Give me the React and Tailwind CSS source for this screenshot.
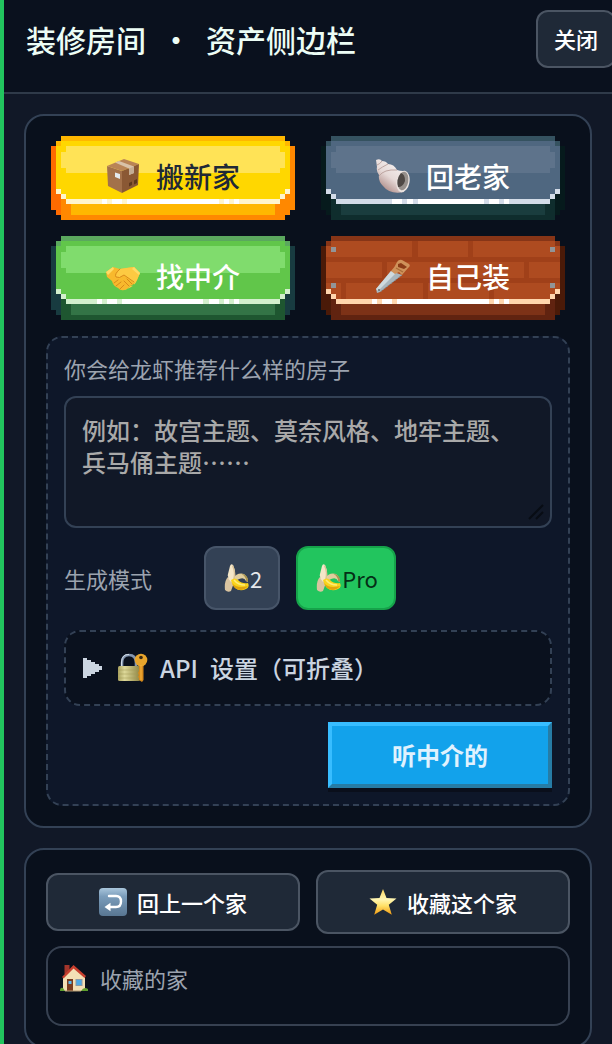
import React, { useState } from 'react';

const BoxIcon = ({ className }) => (
  <svg className={className} viewBox="0 0 34 34" aria-hidden="true">
    <path d="M1 7 L16 12 L16 34 L2 27 Z" fill="#a3714a" />
    <path d="M1 7 L18 0 L33 5 L16 12 Z" fill="#b98456" />
    <path d="M16 12 L33 5 L32 26 L16 34 Z" fill="#8a5834" />
    <path d="M9 3.500 L13 2 L28 7.500 L28 14 L23 16 L23 9.500 Z" fill="#d9c2a8" />
    <path d="M23 9.500 L28 7.500 L28 14 L23 16 Z" fill="#c4ad94" />
    <path d="M9 13.500 L14 15 L14 20 L9 18 Z" fill="#e4eaee" />
    <path d="M23 24 L26 22.500 V26 L23 27.500 Z M28 21.500 L31 20 V24 L28 25.500 Z" fill="#5d371d" />
  </svg>
);

const ShellIcon = ({ className }) => (
  <svg className={className} viewBox="0 0 34 34" aria-hidden="true">
    <defs>
      <linearGradient id="shell-body" x1="0.7" y1="0.1" x2="0.2" y2="0.9">
        <stop offset="0" stopColor="#f4efee" />
        <stop offset="0.5" stopColor="#e6d9d7" />
        <stop offset="1" stopColor="#ab8884" />
      </linearGradient>
    </defs>
    <path d="M0 1 Q4 -1 6 2 Q10 2 12 5 Q18 5 21 11 Q24 12 27 12 L28 33 Q14 36 7 27 Q2 22 3 16 Q0 12 1 8 Z" fill="url(#shell-body)" />
    <path d="M1 6 Q4 5 6 2 M2 11 Q6 8 12 5 M3 17 Q8 10 21 11" fill="none" stroke="#bda5a1" strokeWidth="1" />
    <ellipse cx="27" cy="22.500" rx="6.500" ry="10.800" transform="rotate(10 27 22.5)" fill="#ebe3e0" />
    <ellipse cx="27" cy="22" rx="5.300" ry="9.300" transform="rotate(10 27 22)" fill="#96908c" />
    <path d="M25 14 Q29 15 29 22 Q27 28 22 28 Q20 20 25 14" fill="#4e4845" />
  </svg>
);

const HandshakeIcon = ({ className }) => (
  <svg className={className} viewBox="0 0 34 34" aria-hidden="true">
    <path d="M0 13 L7 8 L14 10 L21 9 L28 8 L34 14 L31 21 Q29 25 24 27 Q21 31 18 31 Q15 32 12 29 Q7 27 6 22 L1 18 Z" fill="#f8b92d" />
    <path d="M14 10 Q9 15 10 18 Q13 20 18 16 L28 24 Q29 27 24 27 Q21 31 18 31 Q29 28 31 21 L34 14 L28 8 L20 9 Z" fill="#fdca42" />
    <path d="M14 10 Q8 15 10 18 Q13 20 18 16 L28 23 M8 24 L12 21 M10 27 L15 23 M14 30 L18 26 M21 20 L26 25 M18 22 L23 27" fill="none" stroke="#d98a1a" strokeWidth="1" strokeLinecap="round" />
    <path d="M0 13 L7 8 L8 10 L2 16 Z M28 8 L34 14 L33 16 L26 10 Z" fill="#ffdc66" />
  </svg>
);

const SawIcon = ({ className }) => (
  <svg className={className} viewBox="0 0 34 34" aria-hidden="true">
    <path d="M15 12 L26 16 L4 33 L1 34 L0 30 Z" fill="#a9b6bc" />
    <path d="M15 12 L20 14 L2 32 L0 30 Z" fill="#cfdadd" />
    <path d="M26 16 L4 33" stroke="#82929a" strokeWidth="1" strokeDasharray="1.5 1" />
    <circle cx="3" cy="31" r="0.900" fill="#59666c" />
    <path d="M15 12 Q19 8 21 3 Q23 0 26 1 L33 5 Q35 7 32 9 L26 16 L23 13 L19 15 Z" fill="#cf925a" />
    <path d="M22 5 L25 4 L31 8 L28 10 L22 8 Z" fill="#8c3c17" />
    <path d="M20 9 L27 13" stroke="#a86c38" strokeWidth="1.2" />
  </svg>
);

const BananaIcon = ({ className }) => (
  <svg className={className} viewBox="0 0 28 28" aria-hidden="true">
    <path d="M6 13 Q2 17 3 26 Q6 29 9 27 Q11 21 13 17 Z" fill="#d9c4a0" />
    <path d="M11 15 Q15 8 22 10 Q26 13 26 18 L24 17 Q22 12 15 16 Z" fill="#e0cd9d" />
    <path d="M19 9.500 Q27 11 26 18 L24 17 Q24 12 19 9.500" fill="#a8934f" />
    <path d="M8 2 Q9 -1 11 1 Q14 7 13 15 L9 18 Q5 14 6 10 Z" fill="#f4e6c8" />
    <path d="M10 2 Q13 8 11 16 L13 15 Q14 7 11 1 Z" fill="#d9c196" />
    <path d="M9 16 Q13 13 16 16 Q20 20 26 19 Q28 23 24 25 Q18 28 13 24 Q10 21 9 16 Z" fill="#f9d41c" />
    <path d="M10 19 Q15 25 26 22 Q23 26 18 26 Q12 25 10 19" fill="#e0a50f" />
    <path d="M12 16 Q16 21 23 21" fill="none" stroke="#ffec78" strokeWidth="1.500" />
  </svg>
);

const LockKeyIcon = ({ className }) => (
  <svg className={className} viewBox="0 0 30 30" aria-hidden="true">
    <defs>
      <linearGradient id="lock-body" x1="0" y1="0" x2="1" y2="0">
        <stop offset="0" stopColor="#a9a25f" />
        <stop offset="0.3" stopColor="#ddd899" />
        <stop offset="1" stopColor="#8f8544" />
      </linearGradient>
    </defs>
    <path d="M4 14 V10 Q4 2 11 2 Q18 2 18 10 V14" fill="none" stroke="#8496b0" strokeWidth="2.600" />
    <path d="M3.500 13 V9 Q4 1 11 1.500" fill="none" stroke="#d3dee9" strokeWidth="1" />
    <rect x="0" y="13" width="22" height="15" rx="1.500" fill="url(#lock-body)" />
    <path d="M0 17 H22 M0 21 H22 M0 25 H22" stroke="#a39a57" strokeWidth="0.500" />
    <path d="M21 11 H25.500 V27 L24 29 L21 27 V25 L20 24 L21 22 L20 20 L21 18 Z" fill="#d78b1c" />
    <circle cx="23" cy="7" r="6.300" fill="#e8a52c" />
    <circle cx="23" cy="4.500" r="1.800" fill="#3b2a12" />
    <path d="M23 12 V27" stroke="#f7b640" strokeWidth="1" />
  </svg>
);

const ReturnIcon = ({ className }) => (
  <svg className={className} viewBox="0 0 28 28" aria-hidden="true">
    <defs>
      <linearGradient id="return-bg" x1="0" y1="0" x2="0" y2="1">
        <stop offset="0" stopColor="#a9c6dc" />
        <stop offset="0.3" stopColor="#7b9dbb" />
        <stop offset="1" stopColor="#587692" />
      </linearGradient>
    </defs>
    <rect width="28" height="28" rx="4" fill="url(#return-bg)" />
    <path d="M10 8 H17 Q22 8 22 13.500 Q22 19 17 19 H10" fill="none" stroke="#fff" strokeWidth="2.400" strokeLinecap="round" />
    <path d="M5.500 19 L11.500 14.800 V23.200 Z" fill="#fff" />
  </svg>
);

const StarIcon = ({ className }) => (
  <svg className={className} viewBox="0 0 28 28" aria-hidden="true">
    <defs>
      <linearGradient id="star-fill" x1="0" y1="0" x2="0" y2="1">
        <stop offset="0" stopColor="#fbd55c" />
        <stop offset="0.4" stopColor="#fff6b4" />
        <stop offset="0.65" stopColor="#ffe168" />
        <stop offset="1" stopColor="#f0980f" />
      </linearGradient>
    </defs>
    <path d="M14 1 L17.500 10 L27.500 10.600 L19.800 16.700 L22.800 26.800 L14 21.500 L5.200 26.800 L8.200 16.700 L0.500 10.600 L10.500 10 Z" fill="url(#star-fill)" />
  </svg>
);

const HouseIcon = ({ className }) => (
  <svg className={className} viewBox="0 0 28 28" aria-hidden="true">
    <rect x="4.500" y="1" width="5" height="9" fill="#a3352b" />
    <path d="M3 13 L14 3 L25 13 V27 H3 Z" fill="#f3dfb5" />
    <path d="M2 13 L13.500 1 L26 12 L24.500 14 L13.500 4.500 L3.500 14.500 Z" fill="#c9402f" />
    <rect x="7" y="15" width="6" height="12" fill="#7a3b1e" />
    <rect x="8.500" y="17" width="3" height="3" fill="#59b8ee" />
    <rect x="15.500" y="15" width="7" height="7" fill="#8d99a3" />
    <rect x="16.500" y="16" width="5" height="5" fill="#4da9e6" />
    <path d="M0 27 Q0 23 3 24 L5 27 Z M21 27 Q24 22 28 25 V27 Z" fill="#5e9d2d" />
    <path d="M5 27 H21" stroke="#b49a71" strokeWidth="1" />
  </svg>
);

const tiles = [
  {
    label: '搬新家',
    Icon: BoxIcon,
    text: 'text-[#1f2937]',
    colors: { left: '#ff6b00', right: '#ff8800', top: '#ffb700', body: '#ffd700', shine: '#ffe356', rim: '#fff5cc', base: '#ff8800', inner: '#ffb700' },
    glints: [[51, 5], [61, 10], [76, 92], [173, 5], [183, 5]],
  },
  {
    label: '回老家',
    Icon: ShellIcon,
    text: 'text-white',
    colors: { left: '#061a1c', right: '#061a1c', top: '#355260', body: '#4f6780', shine: '#5e738b', rim: '#d3dce8', base: '#0f2d2d', inner: '#1a3d3e' },
    glints: [[71, 10], [86, 6], [97, 66], [168, 10], [183, 5]],
  },
  {
    label: '找中介',
    Icon: HandshakeIcon,
    text: 'text-white',
    colors: { left: '#183b40', right: '#183b40', top: '#5ba85e', body: '#61c64a', shine: '#80dc6d', rim: '#d3f0cd', base: '#1e5630', inner: '#337446' },
    glints: [[46, 5], [56, 10], [71, 81], [158, 10], [173, 5], [183, 5]],
  },
  {
    label: '自己装',
    Icon: SawIcon,
    text: 'text-white',
    bricks: true,
    colors: { left: '#4a1a08', right: '#4a1a08', top: '#873517', body: '#ae4b20', rim: '#ffd6ad', base: '#602310', inner: '#7d3217' },
    glints: [[51, 5], [61, 10], [76, 92], [173, 5], [183, 5]],
  },
];

const PixelFrame = ({ colors, glints, bricks }) => (
  <svg
    className="block h-[84px] w-full [grid-area:1/1]"
    viewBox="0 0 244 84"
    preserveAspectRatio="none"
    shapeRendering="crispEdges"
    aria-hidden="true"
  >
    <path d="M0 10 H122 V79 H5 V74 H0 Z" fill={colors.left} />
    <path d="M122 10 H244 V74 H239 V79 H122 Z" fill={colors.right} />
    <path d="M10 0 H234 V5 H239 V10 H5 V5 H10 Z" fill={colors.top} />
    <path d="M10 58 H234 V84 H10 Z" fill={colors.base} />
    <path d="M20 68 H224 V79 H20 Z" fill={colors.inner} />
    <path d="M10 5 H234 V10 H239 V53 H234 V58 H229 V63 H15 V58 H10 V53 H5 V10 H10 Z" fill={colors.body} />
    {bricks ? (
      <>
        <path
          d="M5 21 H239 V26 H5 Z M5 42 H239 V47 H5 Z M91 5 H97 V21 H91 Z M147 5 H152 V21 H147 Z M61 26 H66 V42 H61 Z M203 26 H208 V42 H203 Z M20 47 H25 V63 H20 Z M102 47 H107 V63 H102 Z M168 47 H173 V63 H168 Z"
          fill="#a04019"
        />
        <path d="M10 11 h5 v5 h-5 Z M229 11 h5 v5 h-5 Z M10 47 h5 v5 h-5 Z M229 47 h5 v5 h-5 Z" fill="#929598" />
      </>
    ) : (
      <path d="M15 10 H229 V16 H234 V32 H229 V37 H15 V32 H10 V16 H15 Z" fill={colors.shine} />
    )}
    <path d="M5 53 H10 V58 H15 V63 H229 V58 H234 V53 H239 V58 H234 V63 H229 V68 H15 V63 H10 V58 H5 Z" fill={colors.rim} />
    {glints.map(([x, w]) => (
      <rect key={x} x={x} y="63" width={w} height="5" fill="#fff" />
    ))}
  </svg>
);

const PixelButton = ({ label, Icon, text, colors, glints, bricks }) => (
  <button type="button" className="grid cursor-pointer px-[5px]">
    <PixelFrame colors={colors} glints={glints} bricks={bricks} />
    <span className={`flex items-center justify-center gap-4 pb-1 text-[28px] leading-9 font-medium [grid-area:1/1] ${text}`}>
      <Icon className="size-[34px]" />
      {label}
    </span>
  </button>
);

const modes = [
  { id: '2', label: '2' },
  { id: 'pro', label: 'Pro' },
];

const App = () => {
  const [prompt, setPrompt] = useState('');
  const [mode, setMode] = useState('pro');

  return (
    <aside className="flex h-screen flex-col overflow-hidden border-l-4 border-[#22c55e] bg-[#111827] font-['Noto_Sans_CJK_SC',sans-serif] text-[22px]">
      <header className="flex shrink-0 items-center justify-between border-b-2 border-[#2f3a49] bg-[#0a111e] pt-2.5 pb-6 pl-[22px]">
        <h1 className="flex text-[30px] leading-10 font-medium whitespace-nowrap text-[#ecfdf5]">
          装修房间<span className="w-[60px] text-center">·</span>资产侧边栏
        </h1>
        <button
          type="button"
          className="-mr-1 shrink-0 cursor-pointer rounded-xl border-2 border-[#4b5563] bg-[#1f2937] px-4 pt-[11px] pb-[13px] leading-[30px] font-medium text-white"
        >
          关闭
        </button>
      </header>

      <main className="flex flex-col gap-5 p-5">
        <section className="rounded-[20px] border-2 border-[#334155] bg-[#09101c] p-5">
          <div className="grid grid-cols-2 gap-4">
            {tiles.map((tile) => (
              <PixelButton key={tile.label} {...tile} />
            ))}
          </div>

          {/* Agent prompt */}
          <form
            className="mt-4 rounded-2xl border-2 border-dashed border-[#334155] bg-[#0e1729] px-4 pt-3 pb-4"
            onSubmit={(e) => e.preventDefault()}
          >
            <label htmlFor="room-prompt" className="block leading-9 text-[#9ca3af]">
              你会给龙虾推荐什么样的房子
            </label>
            <div className="relative mt-2.5">
              <textarea
                id="room-prompt"
                className="block h-[132px] w-full resize-none rounded-xl border-2 border-[#334155] bg-[#111827] p-4 text-2xl leading-8 font-medium text-gray-100 placeholder:text-[#a9a9a9]"
                placeholder="例如：故宫主题、莫奈风格、地牢主题、兵马俑主题……"
                value={prompt}
                onChange={(e) => setPrompt(e.target.value)}
              />
              <svg className="pointer-events-none absolute right-2 bottom-2 size-4" viewBox="0 0 16 16" aria-hidden="true">
                <path d="M1 15 L15 1 M8 15 L15 8" stroke="#080c14" strokeWidth="2" />
              </svg>
            </div>

            <div className="mt-[18px] flex items-center gap-4">
              <span className="w-[124px] text-[#9ca3af]">生成模式</span>
              {modes.map((m) => (
                <button
                  key={m.id}
                  type="button"
                  aria-pressed={mode === m.id}
                  onClick={() => setMode(m.id)}
                  className={`flex h-16 cursor-pointer items-center rounded-xl border-2 px-4 ${
                    mode === m.id
                      ? 'border-[#16a34a] bg-[#22c55e] text-[#052e16]'
                      : 'border-[#475569] bg-[#334155] text-[#e5e7eb]'
                  }`}
                >
                  <BananaIcon className="size-7" />
                  {m.label}
                </button>
              ))}
            </div>

            <details className="mt-5 rounded-2xl border-2 border-dashed border-[#334155] bg-[#0a111e] px-4 py-5">
              <summary className="flex cursor-pointer list-none items-center text-2xl leading-8 font-medium text-[#cbd5e1]">
                <svg className="size-5" viewBox="0 0 20 20" shapeRendering="crispEdges" aria-hidden="true">
                  <path d="M1 0 H5 V2 H9 V4 H13 V6 H17 V8 H20 V12 H17 V14 H13 V16 H9 V18 H5 V20 H1 Z" fill="currentColor" />
                </svg>
                <LockKeyIcon className="ml-4 size-[30px]" />
                <span className="ml-3">API</span>
                <span className="ml-3">设置（可折叠）</span>
              </summary>
            </details>

            <button
              type="submit"
              className="mt-4 ml-auto block w-56 cursor-pointer border-4 border-t-[#38bdff] border-r-[#267ca5] border-b-[#267ca5] border-l-[#38bdff] bg-[#12a2eb] py-3 text-2xl leading-[34px] font-bold text-[#e0f2fe] shadow-[0_4px_0_#0a0f1b]"
            >
              听中介的
            </button>
          </form>
        </section>

        {/* Saved homes */}
        <section className="rounded-[20px] border-2 border-[#334155] bg-[#09101c] p-5">
          <div className="grid grid-cols-2 items-center gap-4 font-medium text-white">
            <button
              type="button"
              className="flex h-[58px] cursor-pointer items-center justify-center gap-2.5 rounded-xl border-2 border-[#4b5563] bg-[#1f2937]"
            >
              <ReturnIcon className="size-7" />
              回上一个家
            </button>
            <button
              type="button"
              className="flex h-16 cursor-pointer items-center justify-center gap-2.5 rounded-xl border-2 border-[#4b5563] bg-[#1f2937]"
            >
              <StarIcon className="size-7" />
              收藏这个家
            </button>
          </div>
          <div className="mt-3 h-20 rounded-2xl border-2 border-[#374151] px-3 py-4">
            <h2 className="flex items-center gap-3 leading-7 text-[#9ca3af]">
              <HouseIcon className="size-7" />
              收藏的家
            </h2>
          </div>
        </section>
      </main>
    </aside>
  );
};

export default App;
